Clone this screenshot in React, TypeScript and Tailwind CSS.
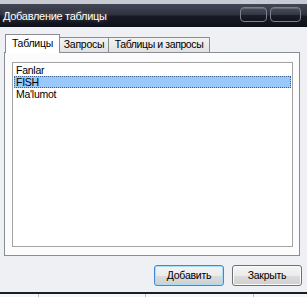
import React from 'react';

const FONT = "font-['Liberation_Sans',Arial,sans-serif]";
const UI_TEXT = 'text-[10.5px] tracking-[-0.25px]';

const items = ['Fanlar', 'FISH', "Ma'lumot"];

const TitleButton: React.FC<{ w: string }> = ({ w }) => (
  <div
    className={`${w} h-[15px] rounded-[4px] border border-[#7d808c] bg-[linear-gradient(to_bottom,#4a4d59_0%,#353844_50%,#1b1d28_55%,#12141d_100%)] shadow-[inset_0_1px_0_rgba(255,255,255,0.15)]`}
  />
);

export default function App() {
  return (
    <div className={`w-[307px] h-[297px] flex flex-col overflow-hidden bg-[#eef0f4] ${FONT}`}>
      {/* Title bar */}
      <div className="h-[27px] shrink-0 border-t-4 border-[#c7cad2] bg-[linear-gradient(to_bottom,#434654_0%,#30333f_45%,#161824_55%,#0e1019_100%)] flex items-center justify-between pl-[3px] pr-[6px]">
        <span className="text-[11px] tracking-[-0.3px] text-white [text-shadow:0_0_5px_rgba(255,255,255,0.35)] leading-none mt-[2px] whitespace-nowrap">
          Добавление таблицы
        </span>
        <div className="flex gap-[3px] -mt-[3px]">
          <TitleButton w="w-[27px]" />
          <TitleButton w="w-[31px]" />
        </div>
      </div>

      {/* Tabs */}
      <div className={`mt-[7px] ml-[5px] h-[18px] flex items-end text-black whitespace-nowrap ${UI_TEXT}`}>
        <div className="relative z-10 w-[55px] h-[19px] -mb-px bg-white border border-b-0 border-[#898c95] flex items-center justify-center">
          Таблицы
        </div>
        <div className="w-[50px] h-[15px] -ml-px border border-b-0 border-[#898c95] bg-[linear-gradient(to_bottom,#f3f3f3,#e1e1e1)] flex items-center justify-center">
          Запросы
        </div>
        <div className="w-[102px] h-[15px] -ml-px border border-b-0 border-[#898c95] bg-[linear-gradient(to_bottom,#f3f3f3,#e1e1e1)] flex items-center justify-center tracking-[-0.4px]">
          Таблицы и запросы
        </div>
      </div>

      {/* Panel */}
      <div className="ml-[4px] w-[296px] h-[204px] shrink-0 border border-[#898c95] bg-[#fcfcfd] pt-[9px] pl-[7px] pr-[6px] pb-[8px] flex">
        <div className="flex-1 border border-[#a3a3a3] bg-white pt-px px-px">
          {items.map((it, i) => (
            <div
              key={it}
              className={`h-[12px] pl-[2px] leading-[12px] text-black ${UI_TEXT} ${
                i === 1 ? 'bg-[#99c8fa] outline outline-1 outline-dotted outline-offset-[-1px] outline-[#3a5f8a]' : ''
              }`}
            >
              {it}
            </div>
          ))}
        </div>
      </div>

      {/* Buttons */}
      <div className={`mt-[9px] pr-[5px] flex justify-end gap-[8px] text-black ${UI_TEXT}`}>
        <button className="w-[70px] h-[21px] rounded-[3px] border border-[#3c8ad8] bg-[linear-gradient(to_bottom,#f4f4f4_0%,#ebebeb_50%,#dcdcdc_51%,#cfcfcf_100%)] shadow-[inset_0_0_0_1px_#a8dcf8]">
          Добавить
        </button>
        <button className="w-[70px] h-[21px] rounded-[3px] border border-[#707070] bg-[linear-gradient(to_bottom,#f4f4f4_0%,#ebebeb_50%,#dcdcdc_51%,#cfcfcf_100%)] shadow-[inset_0_0_0_1px_#fbfbfb]">
          Закрыть
        </button>
      </div>

      {/* Bottom frame */}
      <div className="mt-[6px] h-[2px] shrink-0 bg-[#1b1d29]" />
      <div className="flex-1 bg-[#f7f7f9] flex">
        <div className="ml-[38px] w-px bg-[#b9bcc4]" />
        <div className="ml-[106px] w-px bg-[#b9bcc4]" />
        <div className="ml-[107px] w-px bg-[#b9bcc4]" />
      </div>
    </div>
  );
}
